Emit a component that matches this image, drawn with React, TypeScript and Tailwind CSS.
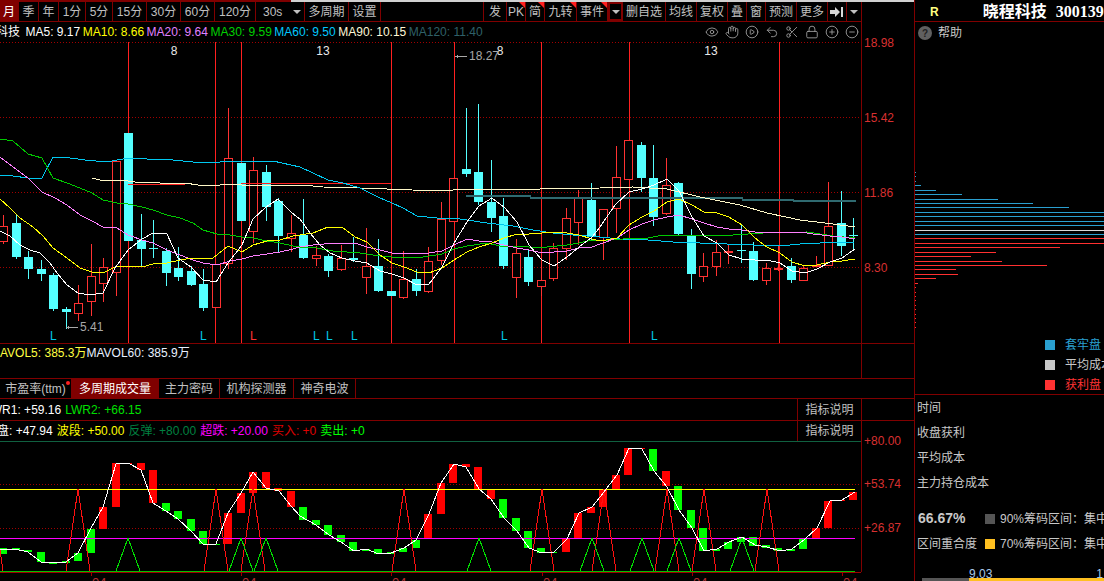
import { CircleMinus, CirclePlay, CirclePlus, Eye, Hand, Lock, Scissors, Undo2 } from "lucide-react";

type Candle = [up: 0 | 1, top: number, bottom: number, wickTop: number, wickBottom: number];

// one entry per month, index gives the x position
const candles: Candle[] = [
  [1, 226, 241, 215, 244], [0, 223, 257, 214, 259], [0, 257, 269, 251, 279], [0, 269, 274, 260, 281],
  [0, 275, 309, 273, 311], [0, 309, 312, 307, 329], [1, 303, 313, 285, 321], [1, 276, 301, 244, 316],
  [1, 267, 283, 258, 302], [1, 161, 272, 161, 296], [0, 133, 241, 133, 241], [0, 240, 249, 214, 266],
  [0, 248, 249, 220, 258], [0, 251, 273, 248, 286], [0, 268, 277, 247, 281], [0, 271, 285, 266, 286],
  [0, 284, 308, 269, 311], [1, 264, 307, 264, 307], [1, 158, 263, 108, 269], [0, 163, 221, 163, 221],
  [1, 170, 231, 157, 243], [0, 172, 207, 165, 221], [0, 201, 236, 198, 252], [1, 233, 238, 215, 252],
  [0, 235, 258, 199, 259], [1, 255, 258, 246, 266], [0, 256, 271, 254, 277], [1, 258, 269, 245, 271],
  [0, 258, 260, 237, 262], [1, 266, 277, 228, 294], [0, 266, 291, 239, 292], [0, 291, 296, 291, 296],
  [1, 279, 297, 251, 299], [0, 279, 291, 269, 296], [1, 261, 291, 247, 293], [1, 219, 260, 202, 265],
  [1, 178, 221, 178, 221], [0, 169, 174, 108, 177], [0, 172, 202, 104, 205], [0, 202, 218, 160, 232],
  [0, 216, 266, 198, 269], [1, 253, 277, 239, 298], [0, 257, 282, 250, 286], [1, 280, 286, 260, 296],
  [1, 248, 278, 243, 281], [1, 218, 248, 208, 260], [1, 197, 222, 190, 245], [0, 200, 236, 183, 241],
  [1, 209, 237, 209, 260], [1, 177, 208, 146, 233], [1, 140, 179, 140, 179], [0, 145, 178, 142, 192],
  [0, 178, 217, 145, 226], [1, 185, 213, 158, 215], [0, 183, 234, 182, 235], [0, 236, 274, 229, 289],
  [1, 266, 276, 253, 282], [1, 252, 266, 240, 276], [1, 251, 252, 245, 264], [0, 250, 251, 225, 263],
  [0, 251, 280, 242, 281], [1, 268, 280, 263, 285], [1, 268, 269, 246, 271], [0, 266, 280, 258, 283],
  [1, 268, 280, 265, 281], [1, 265, 266, 256, 267], [1, 226, 265, 182, 265], [0, 223, 246, 191, 256],
  [0, 235, 236, 218, 250],
];

const barX = (i: number) => Math.round(3.3 + 12.5 * i);

const ma5 = "0,231 10,236 20,245 30,250 40,253 50,263 57,273 67,285 78,293 90,295 103,293 115,268 128,250 142,239 153,233 167,234 178,258 191,267 203,280 216,282 228,263 242,245 253,219 266,207 278,199 292,213 300,219 310,233 320,245 330,253 342,258 355,261 367,263 380,271 392,274 404,278 417,285 429,284 442,267 454,243 467,222 479,206 492,198 504,207 517,222 529,245 542,260 554,266 567,257 579,247 592,237 600,227 615,205 629,192 642,189 654,185 667,179 679,191 692,217 704,236 717,243 729,255 742,259 755,260 767,260 780,263 792,271 805,273 817,269 830,262 842,258 855,249";
const ma10 = "0,199 10,208 20,218 33,227 43,236 53,248 67,258 80,268 92,272 103,273 115,267 128,266 142,267 153,264 167,263 180,260 193,258 213,258 228,246 242,252 253,245 267,241 280,240 293,236 300,235 313,233 328,227 342,227 355,237 367,242 380,255 392,263 404,267 417,272 429,273 442,268 454,260 467,252 479,247 492,243 504,238 517,234 529,234 542,233 554,232 567,233 579,235 592,239 600,241 617,238 629,225 642,217 654,211 667,202 679,199 692,205 704,212 717,213 729,217 742,225 755,238 767,247 780,253 792,262 805,266 817,265 830,262 842,261 855,259";
const ma20 = "0,157 13,167 28,178 42,192 55,198 67,205 80,215 92,221 103,227 117,228 128,235 142,240 153,243 167,250 180,255 193,260 203,263 217,265 230,261 242,259 253,256 267,254 280,252 293,249 300,247 313,245 335,243 355,243 367,247 380,250 392,253 412,254 429,253 442,251 454,245 467,239 479,241 492,242 504,245 517,248 529,250 542,253 554,252 567,251 579,248 592,247 600,244 617,238 629,230 642,224 654,220 667,217 679,215 692,219 704,223 717,227 729,229 742,230 755,232 773,232 800,232 813,234 830,236 842,237 855,239";
const ma30 = "0,139 13,141 28,154 42,158 53,178 67,183 80,188 92,193 103,200 117,203 128,204 142,207 153,210 167,215 180,218 193,223 203,230 217,234 230,235 242,237 253,238 267,241 280,243 293,246 300,247 317,248 333,251 360,253 380,256 392,257 423,257 442,254 454,249 467,246 487,243 500,246 529,247 547,247 567,245 579,243 592,240 600,241 623,239 648,238 663,235 733,235 763,233 807,232 833,236 855,238";
const ma60 = "0,175 13,176 28,178 42,178 53,157 63,157 85,160 107,162 128,158 147,159 173,160 203,163 220,162 240,161 273,161 300,167 313,173 328,180 343,183 360,188 380,198 392,203 403,208 417,216 437,218 460,219 487,223 513,226 533,230 553,233 573,235 600,237 620,239 648,240 673,242 700,243 727,244 753,245 780,246 800,244 820,243 855,242";
const ma90 = "92,178 100,180 128,181 135,182 160,183 185,183 198,185 220,185 230,184 242,185 300,185 313,186 323,187 360,188 387,189 412,190 447,191 460,189 540,189 600,188 633,187 667,189 700,197 715,200 740,205 767,213 800,220 833,224 855,227";
const ma120 = "466,196 530,196 531,198 742,198 743,200 793,200 794,201 856,201";

const indexBars: [0 | 1, number, number][] = [
  [0, 548, 554], [0, 548, 550], [0, 550, 552], [0, 552, 562], [0, 562, 564], [0, 561, 563], [0, 553, 561], [0, 529, 553],
  [1, 507, 529], [1, 463, 507], [1, 463, 464], [1, 463, 470], [1, 470, 503], [0, 503, 511], [0, 511, 519], [0, 519, 531],
  [0, 531, 544], [0, 544, 545], [1, 513, 544], [1, 493, 513], [1, 472, 493], [1, 472, 488], [1, 488, 491], [1, 491, 507],
  [0, 507, 520], [0, 520, 525], [0, 525, 535], [0, 535, 542], [0, 542, 551], [0, 549, 551], [0, 549, 554], [0, 552, 554],
  [0, 548, 552], [0, 540, 548], [1, 514, 539], [1, 483, 514], [1, 464, 483], [1, 464, 467], [1, 467, 489], [1, 490, 499],
  [0, 499, 518], [0, 518, 531], [0, 531, 548], [0, 548, 553], [0, 552, 553], [1, 539, 552], [1, 513, 539], [1, 507, 513],
  [1, 490, 507], [1, 475, 489], [1, 448, 475], [1, 448, 449], [0, 449, 471], [1, 471, 486], [0, 486, 510], [0, 510, 528],
  [0, 528, 551], [0, 549, 551], [0, 542, 549], [0, 537, 542], [0, 537, 546], [0, 545, 548], [0, 548, 551], [0, 549, 551],
  [0, 539, 549], [1, 528, 538], [1, 501, 528], [1, 500, 501], [1, 492, 500],
];

const indexLine = "0,549 15,549 28,552 41,562 53,563 66,562 78,553 91,528 103,507 116,464 128,463 141,470 153,503 166,511 178,519 191,531 203,544 216,544 228,513 241,493 253,472 266,488 279,491 291,506 300,516 316,525 329,535 341,542 354,551 366,549 379,554 391,553 404,548 416,540 429,514 441,483 454,464 466,467 479,489 491,499 504,518 517,531 529,548 542,553 554,552 567,539 579,513 592,507 600,497 617,475 629,448 642,449 654,471 667,487 679,510 692,528 704,551 717,549 729,542 742,537 755,545 767,547 780,551 792,549 805,539 817,528 830,501 842,500 855,492";

const redPeaks = [-9, 78, 216, 253, 404, 542, 604, 667, 704, 767];
const greenPeaks = [128, 241, 266, 479, 592, 642, 679, 742];

const chips: [number, number, string][] = [
  [172, 916, "#2a9fd0"], [176, 916, "#2a9fd0"], [181, 916, "#2a9fd0"], [185, 921, "#2a9fd0"], [190, 936, "#2a9fd0"],
  [194, 962, "#2a9fd0"], [199, 998, "#2a9fd0"], [203, 1033, "#2a9fd0"], [207, 1069, "#2a9fd0"], [212, 1104, "#2a9fd0"],
  [216, 1104, "#2a9fd0"], [221, 1104, "#2a9fd0"], [225, 1104, "#2a9fd0"], [230, 1104, "#d8d8d8"], [234, 1104, "#2a9fd0"],
  [238, 1104, "#ff3030"], [243, 1104, "#ff3030"], [247, 1060, "#ff3030"], [252, 996, "#ff3030"], [256, 971, "#ff3030"],
  [261, 1002, "#ff3030"], [265, 1047, "#ff3030"], [269, 956, "#ff3030"], [274, 958, "#ff3030"], [278, 936, "#ff3030"],
  [283, 918, "#ff3030"], [287, 916, "#ff3030"], [292, 916, "#ff3030"], [296, 916, "#ff3030"], [300, 916, "#ff3030"],
  [305, 916, "#ff3030"], [309, 916, "#ff3030"], [314, 916, "#ff3030"], [318, 916, "#ff3030"], [322, 916, "#ff3030"],
  [327, 916, "#ff3030"],
];

const leftTools = [
  { label: "月", w: "w-[19px]", active: true },
  { label: "季", w: "w-[20px]" },
  { label: "年", w: "w-[20px]" },
  { label: "1分", w: "w-[27px]" },
  { label: "5分", w: "w-[27px]" },
  { label: "15分", w: "w-[34px]" },
  { label: "30分", w: "w-[34px]" },
  { label: "60分", w: "w-[34px]" },
  { label: "120分", w: "w-[41px]" },
];

const rightTools = [
  { label: "发", w: "w-[23px]" },
  { label: "PK", w: "w-[19px]", flag: true },
  { label: "简", w: "w-[19px]", flag: true },
  { label: "九转", w: "w-[32px]", flag: true },
  { label: "事件", w: "w-[31px]", flag: true },
];

const rightTools2 = [
  { label: "删自选", w: "w-[43px]" },
  { label: "均线", w: "w-[31px]" },
  { label: "复权", w: "w-[31px]" },
  { label: "叠", w: "w-[19px]" },
  { label: "窗", w: "w-[19px]" },
  { label: "预测", w: "w-[31px]" },
  { label: "更多", w: "w-[31px]" },
];

const legend = [
  { label: "MA5: 9.17", color: "text-white" },
  { label: "MA10: 8.66", color: "text-[#ffff00]" },
  { label: "MA20: 9.64", color: "text-[#e080ff]" },
  { label: "MA30: 9.59", color: "text-[#00d000]" },
  { label: "MA60: 9.50", color: "text-[#00c8ff]" },
  { label: "MA90: 10.15", color: "text-[#fff8d8]" },
  { label: "MA120: 11.40", color: "text-[#2f6068]" },
];

const tabs = [
  { label: "市盈率(ttm)", w: "w-[72px]", dot: true },
  { label: "多周期成交量", w: "w-[87px]", active: true },
  { label: "主力密码", w: "w-[61px]" },
  { label: "机构探测器", w: "w-[74px]" },
  { label: "神奇电波", w: "w-[62px]" },
];

function Caret() {
  return <span className="h-0 w-0 border-x-[4px] border-t-[4px] border-x-transparent border-t-[#c0c0c0]" />;
}

function Tool({ label, w, active, flag }: { label: string; w: string; active?: boolean; flag?: boolean }) {
  return (
    <div
      className={`relative flex h-full shrink-0 items-center justify-center border-r border-[#800000] ${w} ${
        active ? "bg-[#800000] text-white" : "text-[#c0c0c0]"
      }`}
    >
      {label}
      {flag && (
        <span className="absolute right-0 top-0 h-0 w-0 border-l-[6px] border-t-[6px] border-l-transparent border-t-[#ff2020]" />
      )}
    </div>
  );
}

function Toolbar() {
  return (
    <div className="flex h-[20px] w-[862px] items-stretch border-b border-r border-[#800000] text-[12px]">
      {leftTools.map((t) => (
        <Tool key={t.label} {...t} />
      ))}
      <div className="flex w-[49px] shrink-0 items-center justify-between border-r border-[#800000] pl-[7px] pr-[3px] text-[#c0c0c0]">
        <span>30s</span>
        <Caret />
      </div>
      <Tool label="多周期" w="w-[44px]" />
      <Tool label="设置" w="w-[32px]" />
      <div className="flex-1 border-r border-[#800000]" />
      {rightTools.map((t) => (
        <Tool key={t.label} {...t} />
      ))}
      <div className="flex w-[15px] shrink-0 items-center justify-center border-2 border-[#800000]">
        <Caret />
      </div>
      {rightTools2.map((t) => (
        <Tool key={t.label} {...t} />
      ))}
      <div className="flex w-[19px] shrink-0 items-center justify-center border-r border-[#800000]">
        <svg width="14" height="12" viewBox="0 0 14 12">
          <path d="M0 4h5V1l5 5-5 5V8H0z" fill="#d8d8d8" />
          <rect x="11" y="1" width="2" height="10" fill="#d8d8d8" />
        </svg>
      </div>
      <div className="flex w-[14px] shrink-0 items-center justify-center">
        <Caret />
      </div>
    </div>
  );
}

function Legend() {
  return (
    <div className="flex h-[20px] w-[862px] items-center justify-between overflow-hidden border-r border-[#800000] text-[12px] whitespace-nowrap">
      <div className="-ml-[4px] flex gap-[2.5px]">
        <span className="mr-[3px] text-white">科技</span>
        {legend.map((m) => (
          <span key={m.label} className={m.color}>
            {m.label}
          </span>
        ))}
      </div>
      <div className="mr-[2px] flex items-center gap-[6px] text-[#a0a0a0]">
        <Eye size={14} strokeWidth={1.5} />
        <Hand size={14} strokeWidth={1.5} />
        <CirclePlay size={14} strokeWidth={1.5} />
        <Undo2 size={14} strokeWidth={1.5} />
        <Scissors size={14} strokeWidth={1.5} />
        <Lock size={14} strokeWidth={1.5} />
        <CirclePlus size={14} strokeWidth={1.5} />
        <CircleMinus size={14} strokeWidth={1.5} />
      </div>
    </div>
  );
}

function PriceChart() {
  return (
    <svg width="914" height="301" viewBox="0 42 914 301" shapeRendering="crispEdges" className="block overflow-visible">
      {[42.5, 117.5, 192.5, 267.5].map((y) => (
        <line key={y} x1="0" x2="861" y1={y} y2={y} stroke="#a00000" strokeDasharray="1 2" />
      ))}
      {[128, 215, 241, 391, 454, 541, 629, 779].map((x) => (
        <line key={x} x1={x + 0.5} x2={x + 0.5} y1="42" y2="343" stroke="#ff2020" />
      ))}
      <line x1="861.5" x2="861.5" y1="42" y2="343" stroke="#800000" />
      {candles.map(([up, top, bottom, wickTop, wickBottom], i) => {
        const x = barX(i);
        const color = up ? "#ff3232" : "#54ffff";
        return (
          <g key={i}>
            <line x1={x + 0.5} x2={x + 0.5} y1={wickTop} y2={wickBottom} stroke={color} />
            {up ? (
              <rect x={x - 3.5} y={top + 0.5} width="8" height={bottom - top} fill="#000" stroke={color} />
            ) : (
              <rect x={x - 4} y={top} width="9" height={bottom - top} fill={color} />
            )}
          </g>
        );
      })}
      <line x1="128" x2="185" y1="184.5" y2="184.5" stroke="#ff2020" />
      <line x1="241" x2="391" y1="183.5" y2="183.5" stroke="#ff2020" />
      <polyline points={ma120} fill="none" stroke="#2f6a70" strokeWidth="2" />
      <polyline points={ma90} fill="none" stroke="#fff8c8" />
      <polyline points={ma60} fill="none" stroke="#00c8f0" />
      <polyline points={ma30} fill="none" stroke="#00c800" />
      <polyline points={ma20} fill="none" stroke="#ff80ff" />
      <polyline points={ma10} fill="none" stroke="#ffff00" />
      <polyline points={ma5} fill="none" stroke="#ffffff" />

      <g fontSize="12" fill="#e8e8e8" textAnchor="middle" shapeRendering="auto">
        <text x="174" y="55">8</text>
        <text x="323" y="55">13</text>
        <text x="500" y="55">8</text>
        <text x="711" y="55">13</text>
      </g>
      <g fontSize="12" fill="#a8a8a8" shapeRendering="auto">
        <text x="469" y="60">18.27</text>
        <text x="80" y="331">5.41</text>
      </g>
      <line x1="456" x2="467" y1="56.5" y2="56.5" stroke="#a8a8a8" />
      <path d="M455 56.5l3-2v4z" fill="#a8a8a8" />
      <line x1="66" x2="78" y1="327.5" y2="327.5" stroke="#a8a8a8" />
      <path d="M66 327.5l3-2v4z" fill="#a8a8a8" />
      <g fontSize="12" fill="#00c8e8" shapeRendering="auto">
        {[50, 200, 313, 326, 351, 501, 651].map((x) => (
          <text key={x} x={x} y="340">L</text>
        ))}
      </g>
      <text x="250" y="340" fontSize="12" fill="#ff3232">L</text>
      <g fontSize="12" fill="#d83030" shapeRendering="auto">
        <text x="864" y="47">18.98</text>
        <text x="864" y="122">15.42</text>
        <text x="864" y="197">11.86</text>
        <text x="864" y="272">8.30</text>
      </g>
    </svg>
  );
}

function IndicatorChart() {
  return (
    <svg width="914" height="140" viewBox="0 441 914 140" shapeRendering="crispEdges" className="block overflow-visible">
      <line x1="0" x2="861" y1="441.5" y2="441.5" stroke="#106040" />
      {[484.5, 528.5].map((y) => (
        <line key={y} x1="0" x2="861" y1={y} y2={y} stroke="#a00000" strokeDasharray="1 2" />
      ))}
      <line x1="861.5" x2="861.5" y1="441" y2="572" stroke="#800000" />
      <line x1="0" x2="861" y1="572.5" y2="572.5" stroke="#a00000" />
      {indexBars.map(([up, top, bottom], i) => (
        <rect key={i} x={barX(i) - 4} y={top} width="8" height={bottom - top} fill={up ? "#ff0000" : "#00ff00"} />
      ))}
      <line x1="0" x2="855" y1="489.5" y2="489.5" stroke="#ffff00" />
      <line x1="0" x2="855" y1="538.5" y2="538.5" stroke="#ff00ff" />
      {redPeaks.map((x) => (
        <polyline key={x} points={`${x - 12},571 ${x},489 ${x + 12},571`} fill="none" stroke="#ff1010" />
      ))}
      {greenPeaks.map((x) => (
        <polyline key={x} points={`${x - 12},571 ${x},538 ${x + 12},571`} fill="none" stroke="#00e000" />
      ))}
      <line x1="0" x2="855" y1="571.5" y2="571.5" stroke="#00c000" />
      <polyline points={indexLine} fill="none" stroke="#ffffff" />
      <g fontSize="12" fill="#d83030" shapeRendering="auto">
        <text x="864" y="445">+80.00</text>
        <text x="864" y="488">+53.74</text>
        <text x="864" y="532">+26.87</text>
      </g>
      {[91, 241, 391, 542, 692, 842].map((x) => (
        <g key={x}>
          <line x1={x + 0.5} x2={x + 0.5} y1="572" y2="576" stroke="#a00000" />
          <text x={x + 1} y="587" fontSize="13" fill="#b03030" shapeRendering="auto">04</text>
        </g>
      ))}
    </svg>
  );
}

function ChipChart() {
  return (
    <svg width="189" height="286" viewBox="915 44 189 286" shapeRendering="crispEdges" className="block shrink-0">
      {chips.map(([y, end, color]) => (
        <line key={y} x1="915" x2={end} y1={y + 0.5} y2={y + 0.5} stroke={color} />
      ))}
    </svg>
  );
}

function SidePanel() {
  return (
    <div className="flex h-[581px] w-[189px] shrink-0 flex-col overflow-hidden whitespace-nowrap text-[12px] text-[#c8c8c8]">
      <div className="flex h-[22px] shrink-0 items-center border-b border-[#800000] pt-[2px]">
        <span className="ml-[15px] font-bold text-[#ffff80]">R</span>
        <span className="ml-[44px] text-[16px] font-bold text-white">晓程科技</span>
        <span className="ml-[9px] font-['Liberation_Serif',serif] text-[16px] font-bold text-white">300139</span>
      </div>
      <div className="flex h-[22px] shrink-0 items-center gap-[6px] pl-[3px]">
        <span className="flex h-[14px] w-[14px] items-center justify-center rounded-full bg-[#606060] text-[10px] font-bold text-[#222]">?</span>
        <span>帮助</span>
      </div>
      <ChipChart />
      <div className="mt-[7px] flex shrink-0 flex-col gap-[4px] pl-[130px]">
        <div className="flex h-[16px] items-center gap-[10px] text-[#2a9fd0]">
          <span className="h-[10px] w-[10px] shrink-0 bg-[#2a9fd0]" />
          套牢盘
        </div>
        <div className="flex h-[16px] items-center gap-[10px]">
          <span className="h-[10px] w-[10px] shrink-0 bg-[#c8c8c8]" />
          平均成本
        </div>
        <div className="flex h-[16px] items-center gap-[10px] text-[#ff3333]">
          <span className="h-[10px] w-[10px] shrink-0 bg-[#ff3333]" />
          获利盘
        </div>
      </div>
      <div className="mt-[1px] flex shrink-0 flex-col border-t border-[#800000] pl-[2px]">
        <div className="flex h-[25px] items-center">时间</div>
        <div className="flex h-[25px] items-center">收盘获利</div>
        <div className="flex h-[25px] items-center">平均成本</div>
        <div className="flex h-[25px] items-center">主力持仓成本</div>
      </div>
      <div className="mt-[11px] flex h-[25px] shrink-0 items-center pl-[3px]">
        <span className="w-[67px] shrink-0 text-[14px] font-bold">66.67%</span>
        <span className="mr-[5px] h-[10px] w-[10px] shrink-0 bg-[#555555]" />
        90%筹码区间：集中
      </div>
      <div className="flex h-[25px] shrink-0 items-center pl-[2px]">
        <span className="w-[68px] shrink-0">区间重合度</span>
        <span className="mr-[5px] h-[10px] w-[10px] shrink-0 bg-[#ffc020]" />
        70%筹码区间：集中
      </div>
      <div className="mt-[9px] flex h-[13px] shrink-0 justify-between pl-[54px] pr-[1px] text-[#a8c8e8]">
        <span>9.03</span>
        <span>1</span>
      </div>
      <div className="flex h-[4px] shrink-0 pl-[7px]">
        <span className="w-[47px] bg-[#555555]" />
        <span className="flex-1 bg-[#ffc020]" />
      </div>
    </div>
  );
}

export default function App() {
  return (
    <div className="flex h-[581px] w-[1104px] overflow-hidden bg-black font-['Liberation_Sans','Noto_Sans_CJK_SC',sans-serif]">
      <div className="flex w-[915px] shrink-0 flex-col border-r border-[#800000]">
        <div className="flex h-[2px] shrink-0">
          <span className="w-[291px] bg-[#800000]" />
          <span className="flex-1 bg-[#d0d0d0]" />
        </div>
        <Toolbar />
        <Legend />
        <PriceChart />
        <div className="h-[36px] w-full shrink-0 border-y border-[#800000]">
          <div className="flex h-full w-[862px] items-start overflow-hidden border-r border-[#800000] text-[12px] whitespace-nowrap">
            <span className="-ml-[10px] text-[#ffff40]">MAVOL5: 385.3万</span>
            <span className="text-[#e8f0ff]">MAVOL60: 385.9万</span>
          </div>
        </div>
        <div className="flex h-[20px] shrink-0 items-stretch border-b border-[#800000] text-[12px] text-[#c0c0c0]">
          {tabs.map((t) => (
            <div
              key={t.label}
              className={`relative flex items-center justify-center border-r border-[#800000] ${t.w} ${
                t.active ? "bg-[#800000] text-white" : ""
              }`}
            >
              {t.label}
              {t.dot && <span className="absolute right-[1px] top-[2px] h-[4px] w-[4px] rounded-full bg-[#ff2020]" />}
            </div>
          ))}
        </div>
        <div className="h-[22px] shrink-0 border-b border-[#800000] text-[12px]">
          <div className="flex h-full w-[862px] items-stretch justify-between overflow-hidden">
            <div className="-ml-[15px] flex items-center gap-[4px] whitespace-nowrap">
              <span className="text-white">LWR1: +59.16</span>
              <span className="text-[#00e000]">LWR2: +66.15</span>
            </div>
            <div className="flex w-[65px] shrink-0 items-center justify-center border-x border-[#800000] text-[#c0c0c0]">指标说明</div>
          </div>
        </div>
        <div className="flex h-[20px] w-[862px] shrink-0 items-stretch justify-between overflow-hidden text-[12px]">
          <div className="-ml-[3px] flex items-center gap-[4px] whitespace-nowrap">
            <span className="text-white">盘: +47.94</span>
            <span className="text-[#ffff00]">波段: +50.00</span>
            <span className="text-[#008040]">反弹: +80.00</span>
            <span className="text-[#ff00ff]">超跌: +20.00</span>
            <span className="text-[#e00000]">买入: +0</span>
            <span className="text-[#00ff00]">卖出: +0</span>
          </div>
          <div className="flex w-[65px] shrink-0 items-center justify-center border-x border-[#800000] text-[#c0c0c0]">指标说明</div>
        </div>
        <IndicatorChart />
      </div>
      <SidePanel />
    </div>
  );
}
